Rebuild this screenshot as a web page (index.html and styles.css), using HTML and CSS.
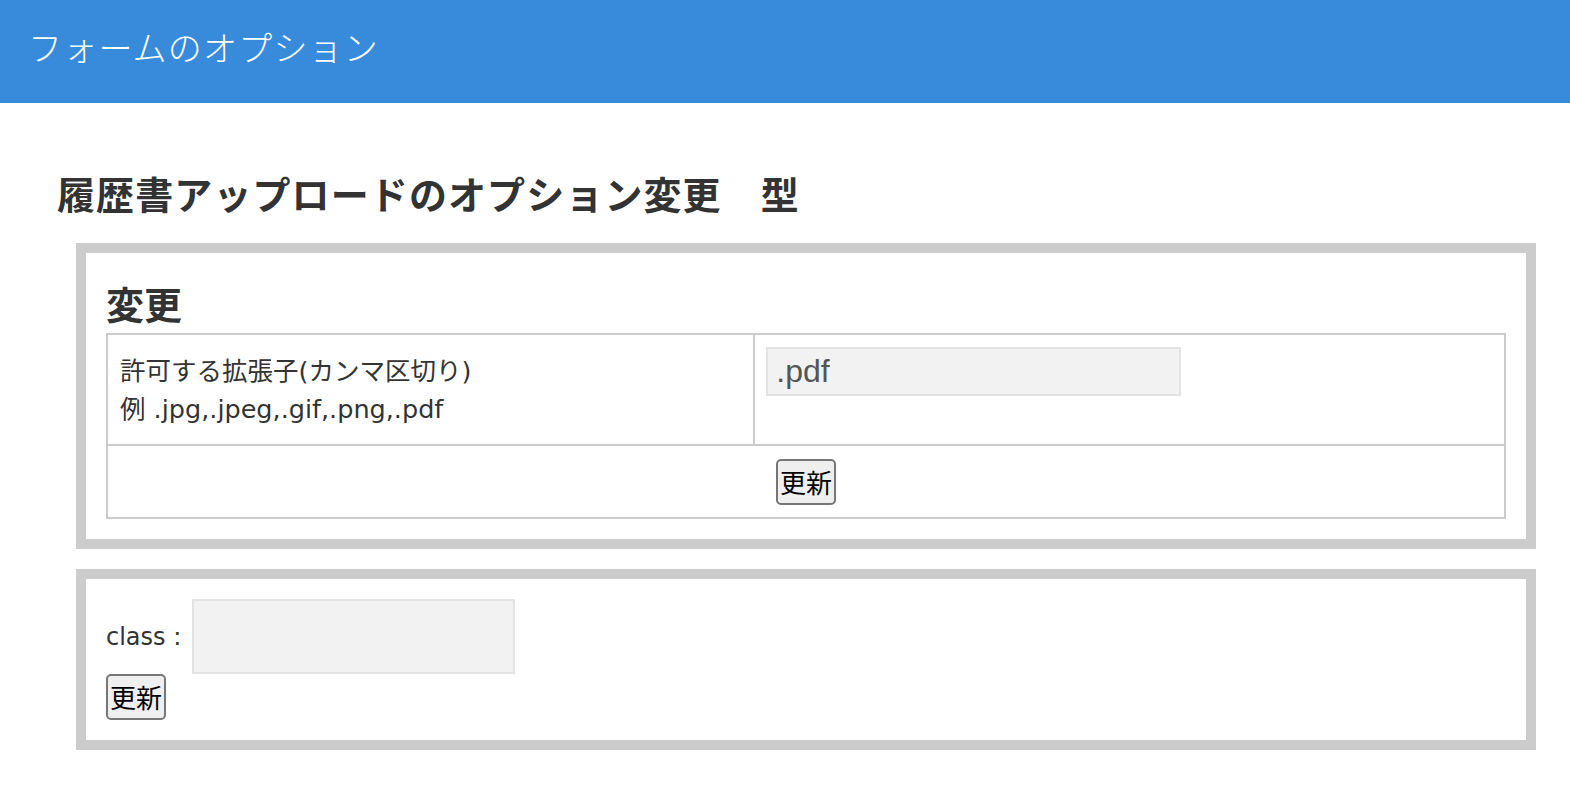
FILE: index.html
```html
<!DOCTYPE html>
<html lang="ja">
<head>
<meta charset="utf-8">
<title>フォームのオプション</title>
<link rel="stylesheet" href="styles.css">
</head>
<body>
<header class="topbar">
  <div class="topbar-title">フォームのオプション</div>
</header>
<main class="main">
  <h2 class="page-title">履歴書アップロードのオプション変更　型</h2>
  <section class="panel">
    <h3 class="panel-title">変更</h3>
    <table class="opt-table">
      <tr>
        <td class="cell-label">許可する拡張子(カンマ区切り)<br>例 .jpg,.jpeg,.gif,.png,.pdf</td>
        <td class="cell-input"><input class="text-input ext-input" type="text" value=".pdf"></td>
      </tr>
      <tr>
        <td class="cell-submit" colspan="2"><button class="btn" type="button">更新</button></td>
      </tr>
    </table>
  </section>
  <section class="panel">
    <div class="class-row">
      <label class="class-label">class :</label>
      <input class="text-input class-input" type="text">
    </div>
    <button class="btn" type="button">更新</button>
  </section>
</main>
</body>
</html>
```
FILE: styles.css
```css
html, body {
  margin: 0;
  padding: 0;
  background: #ffffff;
}
body {
  font-family: "Noto Sans CJK JP", "Noto Sans", sans-serif;
  color: #333333;
}
.topbar {
  height: 103px;
  background: #388adb;
  display: flex;
  align-items: center;
  padding: 0 28px;
  box-sizing: border-box;
}
.topbar-title {
  color: #ffffff;
  font-size: 34px;
  font-weight: 300;
  letter-spacing: 1.2px;
  line-height: 40px;
  margin-top: -9px;
}
.main {
  padding: 0 34px 40px 57px;
}
.page-title {
  margin: 60px 0 20px 0;
  font-size: 38px;
  line-height: 60px;
  font-weight: 700;
  letter-spacing: 1.1px;
  color: #333333;
}
.panel {
  margin: 0 0 20px 19px;
  border: 10px solid #cccccc;
  padding: 20px;
  background: #ffffff;
}
.panel-title {
  margin: 0;
  font-size: 38px;
  line-height: 60px;
  font-weight: 700;
  color: #333333;
}
.opt-table {
  width: 100%;
  border-collapse: collapse;
  border: 2px solid #cccccc;
}
.opt-table td {
  border: 2px solid #cccccc;
}
.cell-label {
  width: 46.3%;
  padding: 17px 12px 16px 12px;
  font-family: "DejaVu Sans", "Noto Sans CJK JP", sans-serif;
  font-size: 25.5px;
  line-height: 38px;
  vertical-align: middle;
  color: #333333;
}
.cell-input {
  padding: 12px 11px;
  vertical-align: top;
}
.cell-submit {
  padding: 13px 12px 12px 12px;
  text-align: center;
}
.text-input {
  box-sizing: border-box;
  background: #f2f2f2;
  border: 2px solid #e3e3e3;
  margin: 0;
  outline: none;
  font-family: "Liberation Sans", Arial, sans-serif;
  color: #555555;
}
.ext-input {
  width: 415px;
  height: 49px;
  font-size: 32px;
  padding: 0 8px;
}
.btn {
  display: inline-block;
  box-sizing: border-box;
  height: 46px;
  font-family: "Noto Sans CJK JP", sans-serif;
  font-size: 26px;
  line-height: 40px;
  padding: 0 2px;
  margin: 0;
  background: #efefef;
  color: #000000;
  border: 2px solid #767676;
  border-radius: 5px;
}
.class-row {
  display: flex;
  align-items: center;
  gap: 11px;
}
.class-label {
  font-family: "DejaVu Sans", "Noto Sans CJK JP", sans-serif;
  font-size: 24px;
  color: #333333;
}
.class-input {
  width: 323px;
  height: 75px;
}
```
